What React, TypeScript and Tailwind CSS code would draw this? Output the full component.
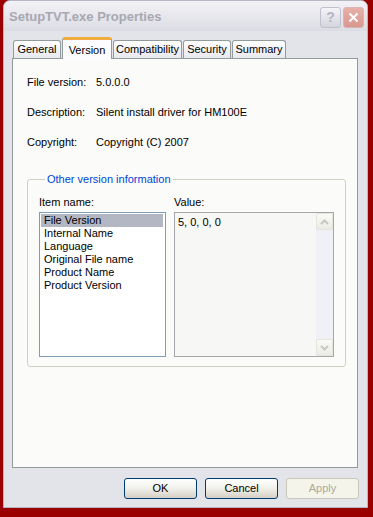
import React from 'react';

const tabs = [
    { name: 'General', w: 'w-[48px]' },
    { name: 'Version', w: 'w-[50px]' },
    { name: 'Compatibility', w: 'w-[69px]' },
    { name: 'Security', w: 'w-[48px]' },
    { name: 'Summary', w: 'w-[54px]' },
];
const items = ['File Version', 'Internal Name', 'Language', 'Original File name', 'Product Name', 'Product Version'];

const fields = [
    { label: 'File version:', value: '5.0.0.0' },
    { label: 'Description:', value: 'Silent install driver for HM100E' },
    { label: 'Copyright:', value: 'Copyright (C) 2007' },
];

const Arrow: React.FC<{ up?: boolean }> = ({ up }) => (
    <div className="w-[17px] h-[17px] rounded-[2px] border border-[#e4e4dc] bg-gradient-to-b from-[#fafaf6] to-[#ecece6] flex items-center justify-center">
        <svg width="9" height="6" viewBox="0 0 9 6">
            <path d={up ? 'M1 5 L4.5 1.5 L8 5' : 'M1 1 L4.5 4.5 L8 1'} fill="none" stroke="#c8c8c0" strokeWidth="2" />
        </svg>
    </div>
);

const App: React.FC = () => {
    return (
        <div
            className="w-[373px] h-[517px] pl-[3px] bg-[#9a0000] overflow-hidden text-[11px] text-black"
            style={{ fontFamily: '"Liberation Sans", Arial, sans-serif' }}
        >
            {/* Window */}
            <div className="w-[365px] h-[508px] rounded-t-[7px] border border-[#b6b6c4] bg-[#e3e3ea] flex flex-col">
                {/* Title bar */}
                <div className="h-[30px] flex items-center pl-[5px] pr-[3px] pt-[2px] rounded-t-[6px] bg-gradient-to-b from-[#f2f2f6] to-[#dcdce4]">
                    <span className="flex-1 font-bold text-[13px] text-[#a8a8b2]">SetupTVT.exe Properties</span>
                    <div className="w-[21px] h-[21px] rounded-[3px] border border-[#c0c0cc] bg-gradient-to-b from-[#f4f4f8] to-[#d4d4de] flex items-center justify-center text-[#b4b4c0] font-bold text-[14px]">
                        ?
                    </div>
                    <div className="ml-[2px] w-[21px] h-[21px] rounded-[3px] border border-[#d8b4b4] bg-gradient-to-b from-[#e6b0a8] to-[#d89890] flex items-center justify-center">
                        <svg width="11" height="11" viewBox="0 0 11 11">
                            <path d="M1.5 1.5 L9.5 9.5 M9.5 1.5 L1.5 9.5" stroke="#fff" strokeWidth="2" />
                        </svg>
                    </div>
                </div>

                <div className="px-[8px]">
                    {/* Tabs */}
                    <div className="mt-[6px] h-[21px] flex items-end pl-[1px]">
                        {tabs.map((t) =>
                            t.name === 'Version' ? (
                                <div
                                    key={t.name}
                                    className={`${t.w} relative z-10 -mb-[1px] h-[22px] mr-[1px] border border-b-0 border-[#919b9c] rounded-t-[3px] bg-[#fcfcfe] flex justify-center items-start pt-[2px] border-t-[3px] border-t-[#f0ac3c]`}
                                >
                                    {t.name}
                                </div>
                            ) : (
                                <div
                                    key={t.name}
                                    className={`${t.w} h-[18px] mr-[1px] border border-b-0 border-[#919b9c] rounded-t-[3px] bg-gradient-to-b from-[#ffffff] to-[#e8e8ee] flex justify-center items-center`}
                                >
                                    {t.name}
                                </div>
                            )
                        )}
                    </div>

                    {/* Panel */}
                    <div className="h-[410px] w-[346px] border border-[#919b9c] bg-[#fbfbf9] px-[14px] pt-[17px]">
                        {fields.map((f) => (
                            <div key={f.label} className="flex h-[13px] leading-[13px] mb-[17px]">
                                <span className="w-[69px]">{f.label}</span>
                                <span>{f.value}</span>
                            </div>
                        ))}

                        <fieldset className="mt-[24px] w-[317px] h-[194px] border border-[#d0d0bf] rounded-[3px] px-[11px] pt-[10px]">
                            <legend className="ml-[6px] px-[2px] text-[#0046d5] leading-[13px]">Other version information</legend>
                            <div className="flex gap-[8px]">
                                <div className="flex flex-col">
                                    <span className="leading-[13px] mb-[3px]">Item name:</span>
                                    <div className="w-[127px] h-[145px] border border-[#7f9db9] bg-white p-[1px]">
                                        {items.map((it, i) => (
                                            <div
                                                key={it}
                                                className={`h-[13px] leading-[13px] pl-[3px] ${i === 0 ? 'bg-[#b3b6c3] mr-[1px]' : ''}`}
                                            >
                                                {it}
                                            </div>
                                        ))}
                                    </div>
                                </div>
                                <div className="flex flex-col">
                                    <span className="leading-[13px] mb-[3px]">Value:</span>
                                    <div className="w-[160px] h-[145px] border border-[#a7a6aa] bg-[#f7f7f5] flex">
                                        <div className="flex-1 pl-[3px] pt-[3px] leading-[13px]">5, 0, 0, 0</div>
                                        <div className="w-[17px] h-full bg-[#f0f1f7] flex flex-col justify-between">
                                            <Arrow up />
                                            <Arrow />
                                        </div>
                                    </div>
                                </div>
                            </div>
                        </fieldset>
                    </div>

                    {/* Buttons */}
                    <div className="mt-[10px] flex justify-end gap-[8px]">
                        {['OK', 'Cancel'].map((b) => (
                            <div
                                key={b}
                                className="w-[73px] h-[21px] rounded-[3px] border border-[#003c74] bg-gradient-to-b from-[#ffffff] via-[#f0f0ea] to-[#d6d0c5] flex items-center justify-center"
                            >
                                {b}
                            </div>
                        ))}
                        <div className="w-[73px] h-[21px] rounded-[3px] border border-[#c9c7ba] bg-[#f5f4ea] text-[#aca899] flex items-center justify-center">
                            Apply
                        </div>
                    </div>
                </div>
            </div>
        </div>
    );
};

export default App;
